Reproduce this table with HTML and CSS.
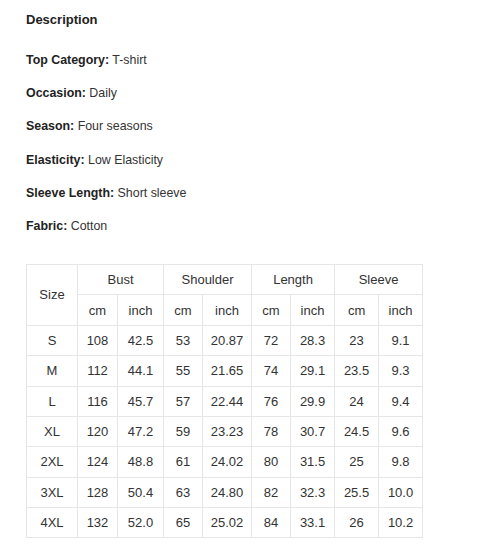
FILE: index.html
```html
<!DOCTYPE html>
<html>
<head>
<meta charset="utf-8">
<link rel="stylesheet" href="styles.css">
</head>
<body>
<div class="desc">
  <h2 class="title">Description</h2>
  <div class="attrs">
    <p class="attr"><b>Top Category:</b> T-shirt</p>
    <p class="attr"><b>Occasion:</b> Daily</p>
    <p class="attr"><b>Season:</b> Four seasons</p>
    <p class="attr"><b>Elasticity:</b> Low Elasticity</p>
    <p class="attr"><b>Sleeve Length:</b> Short sleeve</p>
    <p class="attr"><b>Fabric:</b> Cotton</p>
  </div>
  <table class="size-table">
    <colgroup>
      <col class="c51"><col class="c40"><col class="c46"><col class="c39"><col class="c49"><col class="c39"><col class="c44"><col class="c44"><col class="c44">
    </colgroup>
    <tr><td rowspan="2">Size</td><td colspan="2">Bust</td><td colspan="2">Shoulder</td><td colspan="2">Length</td><td colspan="2">Sleeve</td></tr>
    <tr><td>cm</td><td>inch</td><td>cm</td><td>inch</td><td>cm</td><td>inch</td><td>cm</td><td>inch</td></tr>
    <tr><td>S</td><td>108</td><td>42.5</td><td>53</td><td>20.87</td><td>72</td><td>28.3</td><td>23</td><td>9.1</td></tr>
    <tr><td>M</td><td>112</td><td>44.1</td><td>55</td><td>21.65</td><td>74</td><td>29.1</td><td>23.5</td><td>9.3</td></tr>
    <tr><td>L</td><td>116</td><td>45.7</td><td>57</td><td>22.44</td><td>76</td><td>29.9</td><td>24</td><td>9.4</td></tr>
    <tr><td>XL</td><td>120</td><td>47.2</td><td>59</td><td>23.23</td><td>78</td><td>30.7</td><td>24.5</td><td>9.6</td></tr>
    <tr><td>2XL</td><td>124</td><td>48.8</td><td>61</td><td>24.02</td><td>80</td><td>31.5</td><td>25</td><td>9.8</td></tr>
    <tr><td>3XL</td><td>128</td><td>50.4</td><td>63</td><td>24.80</td><td>82</td><td>32.3</td><td>25.5</td><td>10.0</td></tr>
    <tr><td>4XL</td><td>132</td><td>52.0</td><td>65</td><td>25.02</td><td>84</td><td>33.1</td><td>26</td><td>10.2</td></tr>
  </table>
</div>
</body>
</html>
```

FILE: styles.css
```css
html, body {
  margin: 0;
  padding: 0;
  background: #fff;
}
body {
  font-family: "Liberation Sans", Arial, sans-serif;
  color: #333;
}
.desc {
  padding: 12px 26px 0 26px;
}
.title {
  margin: 0;
  font-size: 13px;
  line-height: 16px;
  font-weight: bold;
  color: #222;
}
.attrs {
  display: flex;
  flex-direction: column;
  gap: 19.2px;
  margin-top: 25px;
}
.attr {
  margin: 0;
  font-size: 12.4px;
  line-height: 14px;
}
.attr b {
  font-weight: bold;
  color: #222;
}
.size-table {
  margin-top: 31px;
  border-collapse: collapse;
  table-layout: fixed;
  width: 397px;
  font-size: 13px;
  color: #333;
}
.size-table td {
  border: 1px solid #e6e6e6;
  text-align: center;
  padding: 0;
  height: 29.4px;
  line-height: 15px;
}
.c51 { width: 51px; }
.c40 { width: 40px; }
.c46 { width: 46px; }
.c39 { width: 39px; }
.c49 { width: 49px; }
.c44 { width: 44px; }
```
